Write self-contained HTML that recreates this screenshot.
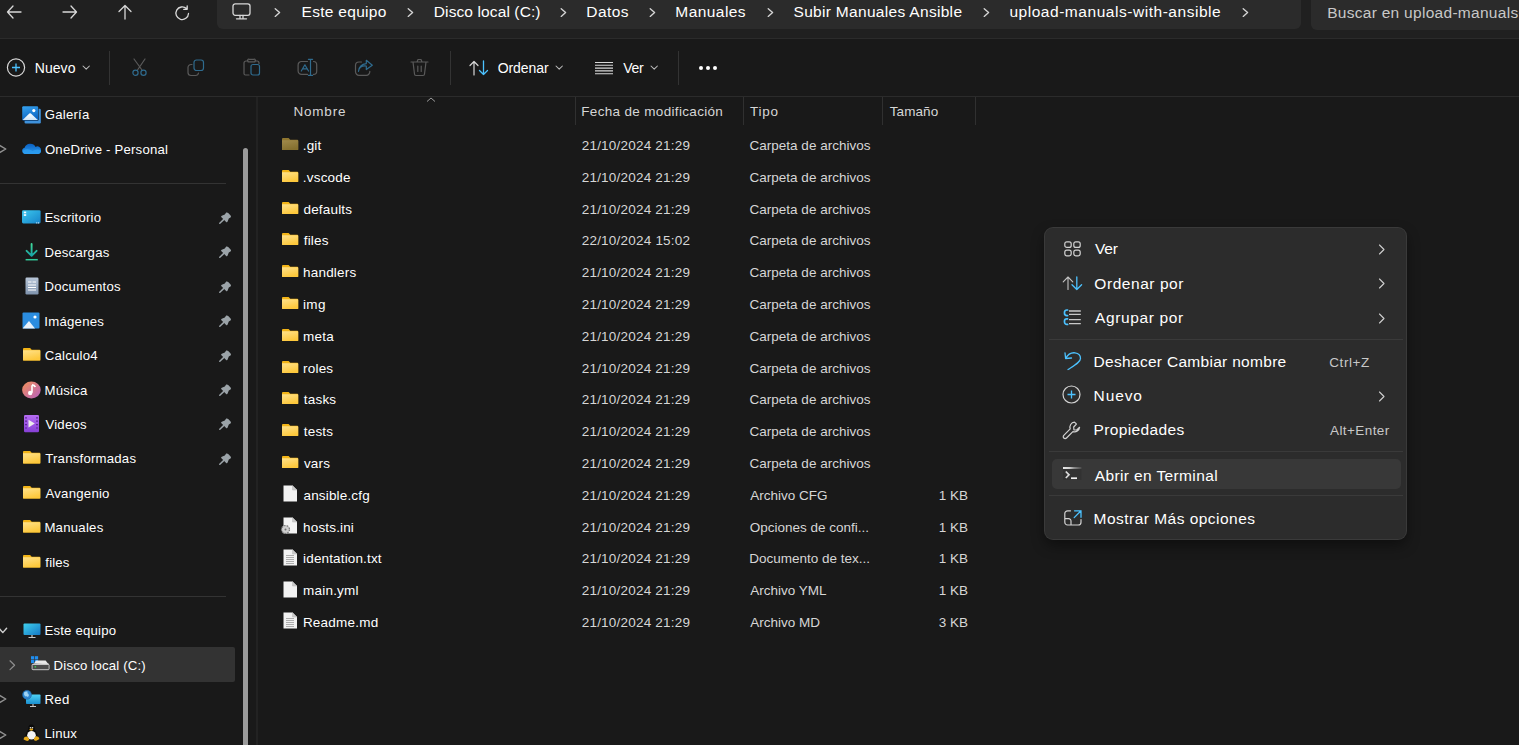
<!DOCTYPE html>
<html><head><meta charset="utf-8"><style>
html,body{margin:0;padding:0;}
body{width:1519px;height:745px;overflow:hidden;position:relative;background:#191919;font-family:"Liberation Sans",sans-serif;}
.t{position:absolute;white-space:nowrap;line-height:0;}
.r{position:absolute;}
.s{position:absolute;overflow:visible;}
</style></head><body>
<div class="r" style="left:0px;top:0px;width:1519px;height:38px;background:#202020;"></div>
<div class="r" style="left:0px;top:38px;width:1519px;height:1px;background:#2b2b2b;"></div>
<div class="r" style="left:0px;top:96px;width:1519px;height:1px;background:#2b2b2b;"></div>
<div class="r" style="left:256px;top:97px;width:2px;height:648px;background:#222222;"></div>
<div class="r" style="left:217px;top:-10px;width:1084px;height:39px;background:#2b2b2b;border-radius:6px;"></div>
<div class="r" style="left:1311px;top:-10px;width:220px;height:40px;background:#2b2b2b;border-radius:6px;"></div>
<svg class="s" style="left:6px;top:5px;" width="16" height="14" viewBox="0 0 16 14"><path d="M1.5 7 H15 M7 1 L1.5 7 L7 13" stroke="#d8d8d8" stroke-width="1.3" fill="none" stroke-linecap="round" stroke-linejoin="round"/></svg>
<svg class="s" style="left:62px;top:5px;" width="16" height="14" viewBox="0 0 16 14"><path d="M1 7 H14.5 M9 1 L14.5 7 L9 13" stroke="#d8d8d8" stroke-width="1.3" fill="none" stroke-linecap="round" stroke-linejoin="round"/></svg>
<svg class="s" style="left:117px;top:4px;" width="16" height="16" viewBox="0 0 16 16"><path d="M8 15 V1.5 M2 7.5 L8 1.5 L14 7.5" stroke="#d8d8d8" stroke-width="1.3" fill="none" stroke-linecap="round" stroke-linejoin="round"/></svg>
<svg class="s" style="left:174px;top:5px;" width="18" height="16" viewBox="0 0 18 16"><path d="M14.5 8.5 A6.3 6.3 0 1 1 12.5 3.6 M13.2 0.8 V4.3 H9.7" stroke="#d8d8d8" stroke-width="1.3" fill="none" stroke-linecap="round" stroke-linejoin="round"/></svg>
<svg class="s" style="left:232px;top:3px;" width="19" height="17" viewBox="0 0 19 17"><rect x="1" y="0.8" width="17" height="11.5" rx="2.2" stroke="#d8d8d8" stroke-width="1.3" fill="none" stroke-linecap="round" stroke-linejoin="round"/><path d="M8 12.3 V15.3 M11 12.3 V15.3 M4.5 15.8 H14.5" stroke="#d8d8d8" stroke-width="1.3" fill="none" stroke-linecap="round" stroke-linejoin="round"/></svg>
<svg class="s" style="left:274px;top:8px;" width="8" height="10" viewBox="0 0 8 10"><path d="M1.2 0.8 L5.6 4.6 L1.2 8.4" stroke="#d6d6d6" stroke-width="1.35" fill="none" stroke-linecap="round" stroke-linejoin="round"/></svg>
<svg class="s" style="left:407px;top:8px;" width="8" height="10" viewBox="0 0 8 10"><path d="M1.2 0.8 L5.6 4.6 L1.2 8.4" stroke="#d6d6d6" stroke-width="1.35" fill="none" stroke-linecap="round" stroke-linejoin="round"/></svg>
<svg class="s" style="left:560px;top:8px;" width="8" height="10" viewBox="0 0 8 10"><path d="M1.2 0.8 L5.6 4.6 L1.2 8.4" stroke="#d6d6d6" stroke-width="1.35" fill="none" stroke-linecap="round" stroke-linejoin="round"/></svg>
<svg class="s" style="left:649px;top:8px;" width="8" height="10" viewBox="0 0 8 10"><path d="M1.2 0.8 L5.6 4.6 L1.2 8.4" stroke="#d6d6d6" stroke-width="1.35" fill="none" stroke-linecap="round" stroke-linejoin="round"/></svg>
<svg class="s" style="left:767px;top:8px;" width="8" height="10" viewBox="0 0 8 10"><path d="M1.2 0.8 L5.6 4.6 L1.2 8.4" stroke="#d6d6d6" stroke-width="1.35" fill="none" stroke-linecap="round" stroke-linejoin="round"/></svg>
<svg class="s" style="left:983px;top:8px;" width="8" height="10" viewBox="0 0 8 10"><path d="M1.2 0.8 L5.6 4.6 L1.2 8.4" stroke="#d6d6d6" stroke-width="1.35" fill="none" stroke-linecap="round" stroke-linejoin="round"/></svg>
<svg class="s" style="left:1242px;top:8px;" width="8" height="10" viewBox="0 0 8 10"><path d="M1.2 0.8 L5.6 4.6 L1.2 8.4" stroke="#d6d6d6" stroke-width="1.35" fill="none" stroke-linecap="round" stroke-linejoin="round"/></svg>
<div class="t" style="left:301.5px;top:12.13px;font-size:15.5px;color:#ffffff;letter-spacing:0.302px;">Este equipo</div>
<div class="t" style="left:433.8px;top:12.13px;font-size:15.5px;color:#ffffff;letter-spacing:0.110px;">Disco local (C:)</div>
<div class="t" style="left:586.3px;top:12.13px;font-size:15.5px;color:#ffffff;letter-spacing:0.457px;">Datos</div>
<div class="t" style="left:675.3px;top:12.13px;font-size:15.5px;color:#ffffff;letter-spacing:0.441px;">Manuales</div>
<div class="t" style="left:793.5px;top:12.13px;font-size:15.5px;color:#ffffff;letter-spacing:0.310px;">Subir Manuales Ansible</div>
<div class="t" style="left:1009.4px;top:12.13px;font-size:15.5px;color:#ffffff;letter-spacing:0.538px;">upload-manuals-with-ansible</div>
<div class="t" style="left:1327.16px;top:13.23px;font-size:15.5px;color:#c8c8c8;letter-spacing:0.287px">Buscar en upload-manuals-with-ansible</div>
<svg class="s" style="left:6px;top:58px;" width="20" height="20" viewBox="0 0 20 20"><circle cx="10" cy="9.5" r="8.6" stroke="#d8d8d8" stroke-width="1.2" fill="none"/><path d="M10 5.5 V13.5 M6 9.5 H14" stroke="#4cc2ff" stroke-width="1.3"/></svg>
<div class="t" style="left:34.7px;top:68.25px;font-size:14px;color:#ffffff;letter-spacing:0.080px;">Nuevo</div>
<svg class="s" style="left:81.9px;top:65.4px;" width="9" height="7" viewBox="0 0 9 7"><path d="M1 1 L4.2 4.2 L7.4 1" stroke="#bdbdbd" stroke-width="1.05" fill="none" stroke-linecap="round" stroke-linejoin="round"/></svg>
<div class="r" style="left:109px;top:51px;width:1px;height:34px;background:#333333;"></div>
<svg class="s" style="left:131px;top:58px;" width="18" height="19" viewBox="0 0 18 19"><path d="M3 1 L11 12 M14 1 L6.5 12" stroke="#5a5a5a" stroke-width="1.2" fill="none" stroke-linecap="round" stroke-linejoin="round"/><circle cx="4.5" cy="14.8" r="2.6" stroke="#2f6b8e" stroke-width="1.2" fill="none" stroke-linecap="round" stroke-linejoin="round"/><circle cx="12.5" cy="14.8" r="2.6" stroke="#2f6b8e" stroke-width="1.2" fill="none" stroke-linecap="round" stroke-linejoin="round"/></svg>
<svg class="s" style="left:187px;top:59px;" width="18" height="18" viewBox="0 0 18 18"><path d="M5 5.5 H4 A3 3 0 0 0 1 8.5 V13.5 A3 3 0 0 0 4 16.5 H8.5 A3 3 0 0 0 11.5 14" stroke="#5a5a5a" stroke-width="1.2" fill="none" stroke-linecap="round" stroke-linejoin="round"/><rect x="7" y="1" width="9.5" height="10.5" rx="2.5" stroke="#2f6b8e" stroke-width="1.2" fill="none" stroke-linecap="round" stroke-linejoin="round"/></svg>
<svg class="s" style="left:243px;top:58px;" width="18" height="19" viewBox="0 0 18 19"><path d="M5 3 H3 A2 2 0 0 0 1 5 V15.5 A1.5 1.5 0 0 0 2.5 17 H6 M12 3 H14 A2 2 0 0 1 16 5 V5.5 M5 3 A1 1 0 0 1 6 1.3 H11 A1 1 0 0 1 12 3 V3.8 H5 Z" stroke="#5a5a5a" stroke-width="1.2" fill="none" stroke-linecap="round" stroke-linejoin="round"/><rect x="8" y="6.5" width="8.5" height="10.5" rx="2" stroke="#2f6b8e" stroke-width="1.2" fill="none" stroke-linecap="round" stroke-linejoin="round"/></svg>
<svg class="s" style="left:297px;top:58px;" width="21" height="19" viewBox="0 0 21 19"><path d="M10.5 3.5 H4.5 A3.4 3.4 0 0 0 1.1 6.9 V13 A3.4 3.4 0 0 0 4.5 16.4 H10.5 M16.5 3.5 A3.2 3.2 0 0 1 19.7 6.7 V13.2 A3.2 3.2 0 0 1 16.5 16.4" stroke="#5a5a5a" stroke-width="1.2" fill="none" stroke-linecap="round" stroke-linejoin="round"/><path d="M13.5 1.3 V17.3 M11.4 1.3 H15.6 M11.4 17.3 H15.6 M4.3 13 L7.9 6.8 L11.5 13 M5.6 10.8 H10.2" stroke="#2f6b8e" stroke-width="1.2" fill="none" stroke-linecap="round" stroke-linejoin="round"/></svg>
<svg class="s" style="left:354px;top:58px;" width="20" height="19" viewBox="0 0 20 19"><path d="M7.5 4 H5 A3.5 3.5 0 0 0 1.5 7.5 V13.8 A3.5 3.5 0 0 0 5 17.3 H12.3 A3.5 3.5 0 0 0 15.8 13.8 V13.3" stroke="#5a5a5a" stroke-width="1.2" fill="none" stroke-linecap="round" stroke-linejoin="round"/><path d="M4.5 13.3 C5 9.2 8.3 7.6 12.3 8 V11.6 L18.3 7.3 L12.3 2.3 V5.6 C7.8 6 5 9 4.5 13.3 Z" stroke="#2f6b8e" stroke-width="1.2" fill="none" stroke-linecap="round" stroke-linejoin="round"/></svg>
<svg class="s" style="left:410px;top:58px;" width="19" height="19" viewBox="0 0 19 19"><path d="M1 4 H18 M7 4 L8 1.5 H11 L12 4 M3 4 L4.5 16 A1.5 1.5 0 0 0 6 17.5 H13 A1.5 1.5 0 0 0 14.5 16 L16 4 M7.8 8 V13.5 M11.2 8 V13.5" stroke="#5a5a5a" stroke-width="1.2" fill="none" stroke-linecap="round" stroke-linejoin="round"/></svg>
<div class="r" style="left:450px;top:51px;width:1px;height:34px;background:#333333;"></div>
<svg class="s" style="left:469px;top:60px;" width="20" height="16" viewBox="0 0 20 16"><path d="M5 15 V1.5 M1 5.5 L5 1.5 L9 5.5" stroke="#d8d8d8" stroke-width="1.2" fill="none" stroke-linecap="round" stroke-linejoin="round"/><path d="M14.5 1 V14.5 M10.5 10.5 L14.5 14.5 L18.5 10.5" stroke="#4cc2ff" stroke-width="1.3" fill="none" stroke-linecap="round" stroke-linejoin="round"/></svg>
<div class="t" style="left:497.7px;top:68.25px;font-size:14px;color:#ffffff;letter-spacing:-0.078px;">Ordenar</div>
<svg class="s" style="left:555.3px;top:65.4px;" width="9" height="7" viewBox="0 0 9 7"><path d="M1 1 L4.2 4.2 L7.4 1" stroke="#bdbdbd" stroke-width="1.05" fill="none" stroke-linecap="round" stroke-linejoin="round"/></svg>
<svg class="s" style="left:594px;top:61px;" width="20" height="14" viewBox="0 0 20 14"><path d="M1 1.5 H19 M1 4.3 H19 M1 7.1 H19 M1 9.9 H19 M1 12.7 H19" stroke="#d8d8d8" stroke-width="1.1"/></svg>
<div class="t" style="left:623.2px;top:68.25px;font-size:14px;color:#ffffff;letter-spacing:-0.260px;">Ver</div>
<svg class="s" style="left:650.1px;top:65.4px;" width="9" height="7" viewBox="0 0 9 7"><path d="M1 1 L4.2 4.2 L7.4 1" stroke="#bdbdbd" stroke-width="1.05" fill="none" stroke-linecap="round" stroke-linejoin="round"/></svg>
<div class="r" style="left:678px;top:51px;width:1px;height:34px;background:#333333;"></div>
<div class="r" style="left:698.5px;top:66.3px;width:4px;height:4px;border-radius:2px;background:#ffffff"></div>
<div class="r" style="left:705.8px;top:66.3px;width:4px;height:4px;border-radius:2px;background:#ffffff"></div>
<div class="r" style="left:713.2px;top:66.3px;width:4px;height:4px;border-radius:2px;background:#ffffff"></div>
<div class="r" style="left:243px;top:148px;width:5px;height:620px;background:#9b9b9b;border-radius:2.5px;"></div>
<div class="r" style="left:0px;top:183px;width:226px;height:1px;background:#333333;"></div>
<div class="r" style="left:0px;top:596px;width:226px;height:1px;background:#333333;"></div>
<div class="r" style="left:0px;top:647px;width:235px;height:35px;background:#333333;border-radius:0 2px 2px 0;"></div>
<div class="t" style="left:44.8px;top:114.83px;font-size:13.2px;color:#ffffff;letter-spacing:0.216px;">Galería</div>
<svg class="s" style="left:22px;top:105.5px;" width="20" height="18" viewBox="0 0 20 18"><defs><linearGradient id="gl" x1="0" y1="0" x2="0.3" y2="1"><stop offset="0" stop-color="#36a3f0"/><stop offset="1" stop-color="#0c66c4"/></linearGradient><linearGradient id="gm" x1="0" y1="0" x2="0" y2="1"><stop offset="0" stop-color="#ffffff"/><stop offset="1" stop-color="#cfe5f8"/></linearGradient></defs><rect x="2.6" y="2.8" width="16.2" height="14.6" rx="1.2" fill="#3f92dc"/><rect x="-0.3" y="-0.3" width="16.9" height="15.1" rx="1.4" fill="#151515"/><rect x="0.2" y="0.2" width="16" height="14.2" rx="1.2" fill="url(#gl)"/><path d="M0.6 14 L7.3 7.6 Q8.1 6.9 8.9 7.6 L15.8 14 Z" fill="url(#gm)"/><circle cx="11.8" cy="4.6" r="1.6" fill="#ffffff"/></svg>
<div class="t" style="left:44.9px;top:149.83px;font-size:13.2px;color:#ffffff;letter-spacing:0.199px;">OneDrive - Personal</div>
<svg class="s" style="left:21.8px;top:142.8px;" width="20" height="12" viewBox="0 0 20 12"><defs><linearGradient id="odg" x1="0" y1="0" x2="0" y2="1"><stop offset="0" stop-color="#0a5fc0"/><stop offset="1" stop-color="#2b9bf0"/></linearGradient></defs><path d="M3.2 11 A3.2 3.2 0 0 1 2.6 4.7 A6 6 0 0 1 13.6 3.9 A3.6 3.6 0 0 1 19 7.4 A3.6 3.6 0 0 1 16 11 Z" fill="url(#odg)"/><path d="M3.2 11 A3.2 3.2 0 0 1 1 7.5 Q6 5 10.5 8 Q15 5.2 19 7.6 A3.6 3.6 0 0 1 16 11 Z" fill="#2c9cf0" opacity="0.85"/></svg>
<div class="t" style="left:44.4px;top:218.43px;font-size:13.2px;color:#ffffff;letter-spacing:0.183px;">Escritorio</div>
<svg class="s" style="left:219.3px;top:211.70000000000002px;" width="13" height="12" viewBox="0 0 13 12"><path d="M7.2 0.6 Q8.2 0.2 9.2 1 L11.6 3.4 Q12.3 4.4 11.8 5.3 L9.8 6.6 L8.6 9.6 Q8.3 10.6 7.4 10.2 L2.2 5 Q1.8 4.1 2.8 3.8 L5.8 2.6 Z" fill="#9ba3a8"/><path d="M4.6 7.6 L0.8 11.2" stroke="#9ba3a8" stroke-width="1.5" stroke-linecap="round"/></svg>
<svg class="s" style="left:22px;top:210px;" width="19" height="14" viewBox="0 0 19 14"><defs><linearGradient id="dk" x1="0" y1="0" x2="1" y2="1"><stop offset="0" stop-color="#3cc8ee"/><stop offset="1" stop-color="#1683c9"/></linearGradient></defs><rect x="0" y="0.2" width="18.6" height="13.2" rx="1.3" fill="url(#dk)"/><rect x="1.8" y="1.6" width="2.4" height="1.7" fill="#f4fbff"/><rect x="1.8" y="4.2" width="2.4" height="1.7" fill="#f4fbff"/><rect x="14.2" y="12.4" width="1.1" height="1" fill="#e8f4ff"/><rect x="16" y="12.4" width="1.1" height="1" fill="#e8f4ff"/></svg>
<div class="t" style="left:44.4px;top:253.03px;font-size:13.2px;color:#ffffff;letter-spacing:0.236px;">Descargas</div>
<svg class="s" style="left:219.3px;top:246.3px;" width="13" height="12" viewBox="0 0 13 12"><path d="M7.2 0.6 Q8.2 0.2 9.2 1 L11.6 3.4 Q12.3 4.4 11.8 5.3 L9.8 6.6 L8.6 9.6 Q8.3 10.6 7.4 10.2 L2.2 5 Q1.8 4.1 2.8 3.8 L5.8 2.6 Z" fill="#9ba3a8"/><path d="M4.6 7.6 L0.8 11.2" stroke="#9ba3a8" stroke-width="1.5" stroke-linecap="round"/></svg>
<svg class="s" style="left:25px;top:243px;" width="14" height="18" viewBox="0 0 14 18"><defs><linearGradient id="dlg" x1="0" y1="0" x2="0" y2="1"><stop offset="0" stop-color="#3fd99a"/><stop offset="1" stop-color="#17a3a6"/></linearGradient></defs><path d="M6.6 1 V12.6 M1.6 7.8 L6.6 12.8 L11.6 7.8" stroke="url(#dlg)" stroke-width="1.9" fill="none" stroke-linecap="round" stroke-linejoin="round"/><path d="M0.6 16.7 H12.8" stroke="#33c99a" stroke-width="1.5"/></svg>
<div class="t" style="left:44.4px;top:287.43px;font-size:13.2px;color:#ffffff;letter-spacing:0.247px;">Documentos</div>
<svg class="s" style="left:219.3px;top:280.7px;" width="13" height="12" viewBox="0 0 13 12"><path d="M7.2 0.6 Q8.2 0.2 9.2 1 L11.6 3.4 Q12.3 4.4 11.8 5.3 L9.8 6.6 L8.6 9.6 Q8.3 10.6 7.4 10.2 L2.2 5 Q1.8 4.1 2.8 3.8 L5.8 2.6 Z" fill="#9ba3a8"/><path d="M4.6 7.6 L0.8 11.2" stroke="#9ba3a8" stroke-width="1.5" stroke-linecap="round"/></svg>
<svg class="s" style="left:25px;top:277px;" width="14" height="18" viewBox="0 0 14 18"><defs><linearGradient id="dc" x1="0" y1="0" x2="0" y2="1"><stop offset="0" stop-color="#b8c6d8"/><stop offset="1" stop-color="#7f93ad"/></linearGradient></defs><rect x="0.5" y="0.5" width="13" height="17" rx="1.2" fill="url(#dc)"/><path d="M3 5 H6.5 M7.5 5 H11 M3 8 H11 M3 10.5 H11 M3 13 H11" stroke="#ffffff" stroke-width="1"/></svg>
<div class="t" style="left:44.3px;top:321.83px;font-size:13.2px;color:#ffffff;letter-spacing:0.248px;">Imágenes</div>
<svg class="s" style="left:219.3px;top:315.1px;" width="13" height="12" viewBox="0 0 13 12"><path d="M7.2 0.6 Q8.2 0.2 9.2 1 L11.6 3.4 Q12.3 4.4 11.8 5.3 L9.8 6.6 L8.6 9.6 Q8.3 10.6 7.4 10.2 L2.2 5 Q1.8 4.1 2.8 3.8 L5.8 2.6 Z" fill="#9ba3a8"/><path d="M4.6 7.6 L0.8 11.2" stroke="#9ba3a8" stroke-width="1.5" stroke-linecap="round"/></svg>
<svg class="s" style="left:22px;top:312px;" width="18" height="17" viewBox="0 0 18 17"><rect x="0.5" y="0.5" width="17" height="16" rx="1" fill="#2b8de0"/><path d="M0.5 16.5 L7 9 L13 16.5 Z" fill="#e8f2fb"/><circle cx="13" cy="5" r="1.6" fill="#ffffff"/></svg>
<div class="t" style="left:44.8px;top:356.23px;font-size:13.2px;color:#ffffff;letter-spacing:0.220px;">Calculo4</div>
<svg class="s" style="left:219.3px;top:349.5px;" width="13" height="12" viewBox="0 0 13 12"><path d="M7.2 0.6 Q8.2 0.2 9.2 1 L11.6 3.4 Q12.3 4.4 11.8 5.3 L9.8 6.6 L8.6 9.6 Q8.3 10.6 7.4 10.2 L2.2 5 Q1.8 4.1 2.8 3.8 L5.8 2.6 Z" fill="#9ba3a8"/><path d="M4.6 7.6 L0.8 11.2" stroke="#9ba3a8" stroke-width="1.5" stroke-linecap="round"/></svg>
<svg class="s" style="left:22.9px;top:348.09999999999997px;" width="18" height="13" viewBox="0 0 18 13"><defs><linearGradient id="fg22348" x1="0" y1="0" x2="0.4" y2="1"><stop offset="0" stop-color="#ffe28c"/><stop offset="1" stop-color="#fdc83c"/></linearGradient></defs><path d="M0 1 A1 1 0 0 1 1 0 H7.09 L8.69 1.8 H16.50 A0.8 0.8 0 0 1 17.30 2.6 V12.50 H0 Z" fill="#f2b417"/><path d="M0 2.2 H16.50 A0.8 0.8 0 0 1 17.30 3 V11.70 A0.8 0.8 0 0 1 16.50 12.50 H0.8 A0.8 0.8 0 0 1 0 11.70 Z" fill="url(#fg22348)"/></svg>
<div class="t" style="left:44.4px;top:390.63px;font-size:13.2px;color:#ffffff;letter-spacing:0.251px;">Música</div>
<svg class="s" style="left:219.3px;top:383.90000000000003px;" width="13" height="12" viewBox="0 0 13 12"><path d="M7.2 0.6 Q8.2 0.2 9.2 1 L11.6 3.4 Q12.3 4.4 11.8 5.3 L9.8 6.6 L8.6 9.6 Q8.3 10.6 7.4 10.2 L2.2 5 Q1.8 4.1 2.8 3.8 L5.8 2.6 Z" fill="#9ba3a8"/><path d="M4.6 7.6 L0.8 11.2" stroke="#9ba3a8" stroke-width="1.5" stroke-linecap="round"/></svg>
<svg class="s" style="left:22px;top:380.5px;" width="19" height="18" viewBox="0 0 19 18"><defs><linearGradient id="mg" x1="0" y1="0" x2="1" y2="1"><stop offset="0" stop-color="#f39157"/><stop offset="1" stop-color="#b65fc0"/></linearGradient></defs><ellipse cx="9.4" cy="9" rx="9.3" ry="8.4" fill="url(#mg)"/><path d="M10 4.2 V11.8" stroke="#fff" stroke-width="1.6"/><path d="M10 3.8 Q12.5 4 13.3 6" stroke="#fff" stroke-width="1.8" fill="none"/><circle cx="8.2" cy="12" r="2.2" fill="#fff"/></svg>
<div class="t" style="left:45.4px;top:425.03px;font-size:13.2px;color:#ffffff;letter-spacing:0.240px;">Videos</div>
<svg class="s" style="left:219.3px;top:418.3px;" width="13" height="12" viewBox="0 0 13 12"><path d="M7.2 0.6 Q8.2 0.2 9.2 1 L11.6 3.4 Q12.3 4.4 11.8 5.3 L9.8 6.6 L8.6 9.6 Q8.3 10.6 7.4 10.2 L2.2 5 Q1.8 4.1 2.8 3.8 L5.8 2.6 Z" fill="#9ba3a8"/><path d="M4.6 7.6 L0.8 11.2" stroke="#9ba3a8" stroke-width="1.5" stroke-linecap="round"/></svg>
<svg class="s" style="left:24px;top:415px;" width="16" height="18" viewBox="0 0 16 18"><defs><linearGradient id="vg" x1="0" y1="0" x2="0" y2="1"><stop offset="0" stop-color="#b56cf2"/><stop offset="1" stop-color="#8740d6"/></linearGradient></defs><rect x="0" y="0" width="15" height="17.2" rx="1.2" fill="url(#vg)"/><path d="M1.2 2.8 H2.8 M1.2 6.2 H2.8 M1.2 9.6 H2.8 M1.2 13 H2.8 M12.2 2.8 H13.8 M12.2 6.2 H13.8 M12.2 9.6 H13.8 M12.2 13 H13.8" stroke="#4f1f86" stroke-width="1.2"/><path d="M4.5 4.8 L10.8 8.6 L4.5 12.4 Z" fill="#ececec"/></svg>
<div class="t" style="left:45.2px;top:459.43px;font-size:13.2px;color:#ffffff;letter-spacing:0.220px;">Transformadas</div>
<svg class="s" style="left:219.3px;top:452.7px;" width="13" height="12" viewBox="0 0 13 12"><path d="M7.2 0.6 Q8.2 0.2 9.2 1 L11.6 3.4 Q12.3 4.4 11.8 5.3 L9.8 6.6 L8.6 9.6 Q8.3 10.6 7.4 10.2 L2.2 5 Q1.8 4.1 2.8 3.8 L5.8 2.6 Z" fill="#9ba3a8"/><path d="M4.6 7.6 L0.8 11.2" stroke="#9ba3a8" stroke-width="1.5" stroke-linecap="round"/></svg>
<svg class="s" style="left:22.9px;top:451.29999999999995px;" width="18" height="13" viewBox="0 0 18 13"><defs><linearGradient id="fg22451" x1="0" y1="0" x2="0.4" y2="1"><stop offset="0" stop-color="#ffe28c"/><stop offset="1" stop-color="#fdc83c"/></linearGradient></defs><path d="M0 1 A1 1 0 0 1 1 0 H7.09 L8.69 1.8 H16.50 A0.8 0.8 0 0 1 17.30 2.6 V12.50 H0 Z" fill="#f2b417"/><path d="M0 2.2 H16.50 A0.8 0.8 0 0 1 17.30 3 V11.70 A0.8 0.8 0 0 1 16.50 12.50 H0.8 A0.8 0.8 0 0 1 0 11.70 Z" fill="url(#fg22451)"/></svg>
<div class="t" style="left:45.5px;top:493.83px;font-size:13.2px;color:#ffffff;letter-spacing:0.233px;">Avangenio</div>
<svg class="s" style="left:22.9px;top:485.7px;" width="18" height="13" viewBox="0 0 18 13"><defs><linearGradient id="fg22485" x1="0" y1="0" x2="0.4" y2="1"><stop offset="0" stop-color="#ffe28c"/><stop offset="1" stop-color="#fdc83c"/></linearGradient></defs><path d="M0 1 A1 1 0 0 1 1 0 H7.09 L8.69 1.8 H16.50 A0.8 0.8 0 0 1 17.30 2.6 V12.50 H0 Z" fill="#f2b417"/><path d="M0 2.2 H16.50 A0.8 0.8 0 0 1 17.30 3 V11.70 A0.8 0.8 0 0 1 16.50 12.50 H0.8 A0.8 0.8 0 0 1 0 11.70 Z" fill="url(#fg22485)"/></svg>
<div class="t" style="left:44.4px;top:528.23px;font-size:13.2px;color:#ffffff;letter-spacing:0.245px;">Manuales</div>
<svg class="s" style="left:22.9px;top:520.1px;" width="18" height="13" viewBox="0 0 18 13"><defs><linearGradient id="fg22520" x1="0" y1="0" x2="0.4" y2="1"><stop offset="0" stop-color="#ffe28c"/><stop offset="1" stop-color="#fdc83c"/></linearGradient></defs><path d="M0 1 A1 1 0 0 1 1 0 H7.09 L8.69 1.8 H16.50 A0.8 0.8 0 0 1 17.30 2.6 V12.50 H0 Z" fill="#f2b417"/><path d="M0 2.2 H16.50 A0.8 0.8 0 0 1 17.30 3 V11.70 A0.8 0.8 0 0 1 16.50 12.50 H0.8 A0.8 0.8 0 0 1 0 11.70 Z" fill="url(#fg22520)"/></svg>
<div class="t" style="left:45.3px;top:562.63px;font-size:13.2px;color:#ffffff;letter-spacing:0.176px;">files</div>
<svg class="s" style="left:22.9px;top:554.5px;" width="18" height="13" viewBox="0 0 18 13"><defs><linearGradient id="fg22554" x1="0" y1="0" x2="0.4" y2="1"><stop offset="0" stop-color="#ffe28c"/><stop offset="1" stop-color="#fdc83c"/></linearGradient></defs><path d="M0 1 A1 1 0 0 1 1 0 H7.09 L8.69 1.8 H16.50 A0.8 0.8 0 0 1 17.30 2.6 V12.50 H0 Z" fill="#f2b417"/><path d="M0 2.2 H16.50 A0.8 0.8 0 0 1 17.30 3 V11.70 A0.8 0.8 0 0 1 16.50 12.50 H0.8 A0.8 0.8 0 0 1 0 11.70 Z" fill="url(#fg22554)"/></svg>
<div class="t" style="left:44.4px;top:631.33px;font-size:13.2px;color:#ffffff;letter-spacing:0.209px;">Este equipo</div>
<svg class="s" style="left:22.8px;top:622.8px;" width="18" height="16" viewBox="0 0 18 16"><defs><linearGradient id="pcg" x1="0" y1="0" x2="1" y2="1"><stop offset="0" stop-color="#3fd0ee"/><stop offset="1" stop-color="#1577c4"/></linearGradient></defs><rect x="0.5" y="0.5" width="17" height="11.5" rx="1" fill="url(#pcg)"/><path d="M9 12 V14 M5.5 14.5 H12.5" stroke="#c8c8c8" stroke-width="1.2"/></svg>
<div class="t" style="left:44.4px;top:699.93px;font-size:13.2px;color:#ffffff;letter-spacing:0.363px;">Red</div>
<svg class="s" style="left:22px;top:690px;" width="19" height="18" viewBox="0 0 19 18"><defs><linearGradient id="ng" x1="0" y1="0" x2="0" y2="1"><stop offset="0" stop-color="#4fd2f5"/><stop offset="1" stop-color="#1a8fd0"/></linearGradient></defs><rect x="4" y="4.5" width="14.5" height="9.5" rx="0.8" fill="url(#ng)"/><path d="M11 14 V16 M8 16.5 H14" stroke="#c8c8c8" stroke-width="1.1"/><circle cx="5" cy="4.8" r="4.5" fill="#2f86cf"/><path d="M2 2.5 Q3.5 1 5.5 1.5 Q5 3.5 6.5 4 Q7.5 5.5 6 7 Q4.5 6 3.5 6.5 Q1.5 5 2 2.5 Z" fill="#9fd3f5"/><circle cx="5" cy="4.8" r="4.5" fill="none" stroke="#1d5f9e" stroke-width="0.5"/></svg>
<div class="t" style="left:44.4px;top:734.33px;font-size:13.2px;color:#ffffff;letter-spacing:0.236px;">Linux</div>
<svg class="s" style="left:23px;top:724px;" width="17" height="17" viewBox="0 0 17 17"><path d="M8.5 0.5 C5.8 0.5 5.2 3 5.3 5.5 C4 7.5 2.2 9.5 2.4 12.5 C2.6 14.5 5 15.5 8.5 15.5 C12 15.5 14.4 14.5 14.6 12.5 C14.8 9.5 13 7.5 11.7 5.5 C11.8 3 11.2 0.5 8.5 0.5 Z" fill="#0a0a0a"/><ellipse cx="8.5" cy="11.2" rx="4.3" ry="4.3" fill="#f4f4f4"/><circle cx="7.5" cy="3.8" r="0.8" fill="#e8e8e8"/><circle cx="9.5" cy="3.8" r="0.8" fill="#e8e8e8"/><ellipse cx="8.3" cy="5.6" rx="1.9" ry="1.1" fill="#e6a817"/><path d="M0.6 15.6 Q0.8 12.6 3.6 12.6 Q5.8 13 6.2 15.8 Q5.6 17.2 3.4 16.8 Z M16.4 15 Q16 12 13.2 12.3 Q11 13 10.8 15.8 Q11.8 17.4 13.8 16.6 Z" fill="#e6a817"/></svg>
<div class="t" style="left:53.6px;top:665.83px;font-size:13.2px;color:#ffffff;letter-spacing:0.179px;">Disco local (C:)</div>
<svg class="s" style="left:31px;top:655.5px;" width="19" height="15" viewBox="0 0 19 15"><rect x="0" y="0.2" width="3.2" height="3.2" fill="#1f8ef0"/><rect x="3.9" y="0.2" width="3.2" height="3.2" fill="#1f8ef0"/><rect x="0" y="3.9" width="3.2" height="3.2" fill="#1f8ef0"/><rect x="3.9" y="3.9" width="3.2" height="3.2" fill="#1f8ef0"/><path d="M3.2 7.2 L5 4.4 H14.6 L17.6 8.6 Z" fill="#e9e9e9"/><rect x="1.1" y="8.3" width="17" height="5.4" rx="0.9" fill="#4c4c4c" stroke="#d2d2d2" stroke-width="0.9"/><path d="M3.2 7.4 L1.1 8.6 H18.1 L17.4 7.6" fill="#e0e0e0"/><rect x="3.6" y="10.1" width="1.5" height="1.4" fill="#3bd14f"/></svg>
<svg class="s" style="left:-4.5px;top:143px;" width="11" height="12" viewBox="0 0 11 12"><path d="M1 0.8 L9.8 6 L1 11.2" stroke="#929292" stroke-width="1.4" fill="none" stroke-linecap="round" stroke-linejoin="round"/></svg>
<svg class="s" style="left:-4.5px;top:692.8px;" width="11" height="12" viewBox="0 0 11 12"><path d="M1 0.8 L9.8 6 L1 11.2" stroke="#929292" stroke-width="1.4" fill="none" stroke-linecap="round" stroke-linejoin="round"/></svg>
<svg class="s" style="left:-4.5px;top:728.5px;" width="11" height="12" viewBox="0 0 11 12"><path d="M1 0.8 L9.8 6 L1 11.2" stroke="#929292" stroke-width="1.4" fill="none" stroke-linecap="round" stroke-linejoin="round"/></svg>
<svg class="s" style="left:8.5px;top:659.8px;" width="8" height="11" viewBox="0 0 8 11"><path d="M1 0.8 L5.6 5.2 L1 9.6" stroke="#8f8f8f" stroke-width="1.2" fill="none" stroke-linecap="round" stroke-linejoin="round"/></svg>
<svg class="s" style="left:-2px;top:626.5px;" width="10" height="8" viewBox="0 0 10 8"><path d="M1 1.2 L4.8 5.6 L8.6 1.2" stroke="#cfcfcf" stroke-width="1.4" fill="none" stroke-linecap="round" stroke-linejoin="round"/></svg>
<div class="t" style="left:293.4px;top:112.22px;font-size:13.5px;color:#d6d6d6;letter-spacing:0.819px;">Nombre</div>
<div class="t" style="left:581.3px;top:112.22px;font-size:13.5px;color:#d6d6d6;letter-spacing:0.325px;">Fecha de modificación</div>
<div class="t" style="left:750.0px;top:112.22px;font-size:13.5px;color:#d6d6d6;letter-spacing:0.731px;">Tipo</div>
<div class="t" style="left:889.7px;top:112.22px;font-size:13.5px;color:#d6d6d6;letter-spacing:0.104px;">Tamaño</div>
<div class="r" style="left:575px;top:97px;width:1px;height:28px;background:#303030;"></div>
<div class="r" style="left:743px;top:97px;width:1px;height:28px;background:#303030;"></div>
<div class="r" style="left:882px;top:97px;width:1px;height:28px;background:#303030;"></div>
<div class="r" style="left:975px;top:97px;width:1px;height:28px;background:#303030;"></div>
<svg class="s" style="left:426px;top:97px;" width="10" height="6" viewBox="0 0 10 6"><path d="M1 4.5 L5 1 L9 4.5" stroke="#9a9a9a" stroke-width="1" fill="none"/></svg>
<div class="t" style="left:302.8px;top:145.92px;font-size:13.5px;color:#ffffff;letter-spacing:0.150px;">.git</div>
<div class="t" style="left:581.7px;top:145.92px;font-size:13.5px;color:#d6d6d6;letter-spacing:0.212px;">21/10/2024 21:29</div>
<div class="t" style="left:749.6px;top:145.92px;font-size:13.5px;color:#d6d6d6;letter-spacing:0.000px;">Carpeta de archivos</div>
<svg class="s" style="left:281.8px;top:137.9px;" width="17" height="13" viewBox="0 0 17 13"><defs><linearGradient id="fg281137" x1="0" y1="0" x2="0.4" y2="1"><stop offset="0" stop-color="#a08a4c"/><stop offset="1" stop-color="#85702f"/></linearGradient></defs><path d="M0 1 A1 1 0 0 1 1 0 H6.64 L8.24 1.8 H15.40 A0.8 0.8 0 0 1 16.20 2.6 V12.10 H0 Z" fill="#8f7630"/><path d="M0 2.2 H15.40 A0.8 0.8 0 0 1 16.20 3 V11.30 A0.8 0.8 0 0 1 15.40 12.10 H0.8 A0.8 0.8 0 0 1 0 11.30 Z" fill="url(#fg281137)"/></svg>
<div class="t" style="left:302.8px;top:177.72px;font-size:13.5px;color:#ffffff;letter-spacing:0.194px;">.vscode</div>
<div class="t" style="left:581.7px;top:177.72px;font-size:13.5px;color:#d6d6d6;letter-spacing:0.212px;">21/10/2024 21:29</div>
<div class="t" style="left:749.6px;top:177.72px;font-size:13.5px;color:#d6d6d6;letter-spacing:0.000px;">Carpeta de archivos</div>
<svg class="s" style="left:281.8px;top:169.70000000000002px;" width="17" height="13" viewBox="0 0 17 13"><defs><linearGradient id="fg281169" x1="0" y1="0" x2="0.4" y2="1"><stop offset="0" stop-color="#ffe28c"/><stop offset="1" stop-color="#fdc83c"/></linearGradient></defs><path d="M0 1 A1 1 0 0 1 1 0 H6.64 L8.24 1.8 H15.40 A0.8 0.8 0 0 1 16.20 2.6 V12.10 H0 Z" fill="#f2b417"/><path d="M0 2.2 H15.40 A0.8 0.8 0 0 1 16.20 3 V11.30 A0.8 0.8 0 0 1 15.40 12.10 H0.8 A0.8 0.8 0 0 1 0 11.30 Z" fill="url(#fg281169)"/></svg>
<div class="t" style="left:303.5px;top:209.52px;font-size:13.5px;color:#ffffff;letter-spacing:0.169px;">defaults</div>
<div class="t" style="left:581.7px;top:209.52px;font-size:13.5px;color:#d6d6d6;letter-spacing:0.212px;">21/10/2024 21:29</div>
<div class="t" style="left:749.6px;top:209.52px;font-size:13.5px;color:#d6d6d6;letter-spacing:0.000px;">Carpeta de archivos</div>
<svg class="s" style="left:281.8px;top:201.5px;" width="17" height="13" viewBox="0 0 17 13"><defs><linearGradient id="fg281201" x1="0" y1="0" x2="0.4" y2="1"><stop offset="0" stop-color="#ffe28c"/><stop offset="1" stop-color="#fdc83c"/></linearGradient></defs><path d="M0 1 A1 1 0 0 1 1 0 H6.64 L8.24 1.8 H15.40 A0.8 0.8 0 0 1 16.20 2.6 V12.10 H0 Z" fill="#f2b417"/><path d="M0 2.2 H15.40 A0.8 0.8 0 0 1 16.20 3 V11.30 A0.8 0.8 0 0 1 15.40 12.10 H0.8 A0.8 0.8 0 0 1 0 11.30 Z" fill="url(#fg281201)"/></svg>
<div class="t" style="left:303.8px;top:241.32px;font-size:13.5px;color:#ffffff;letter-spacing:0.150px;">files</div>
<div class="t" style="left:581.7px;top:241.32px;font-size:13.5px;color:#d6d6d6;letter-spacing:0.217px;">22/10/2024 15:02</div>
<div class="t" style="left:749.6px;top:241.32px;font-size:13.5px;color:#d6d6d6;letter-spacing:0.000px;">Carpeta de archivos</div>
<svg class="s" style="left:281.8px;top:233.3px;" width="17" height="13" viewBox="0 0 17 13"><defs><linearGradient id="fg281233" x1="0" y1="0" x2="0.4" y2="1"><stop offset="0" stop-color="#ffe28c"/><stop offset="1" stop-color="#fdc83c"/></linearGradient></defs><path d="M0 1 A1 1 0 0 1 1 0 H6.64 L8.24 1.8 H15.40 A0.8 0.8 0 0 1 16.20 2.6 V12.10 H0 Z" fill="#f2b417"/><path d="M0 2.2 H15.40 A0.8 0.8 0 0 1 16.20 3 V11.30 A0.8 0.8 0 0 1 15.40 12.10 H0.8 A0.8 0.8 0 0 1 0 11.30 Z" fill="url(#fg281233)"/></svg>
<div class="t" style="left:303.1px;top:273.12px;font-size:13.5px;color:#ffffff;letter-spacing:0.185px;">handlers</div>
<div class="t" style="left:581.7px;top:273.12px;font-size:13.5px;color:#d6d6d6;letter-spacing:0.212px;">21/10/2024 21:29</div>
<div class="t" style="left:749.6px;top:273.12px;font-size:13.5px;color:#d6d6d6;letter-spacing:0.000px;">Carpeta de archivos</div>
<svg class="s" style="left:281.8px;top:265.09999999999997px;" width="17" height="13" viewBox="0 0 17 13"><defs><linearGradient id="fg281265" x1="0" y1="0" x2="0.4" y2="1"><stop offset="0" stop-color="#ffe28c"/><stop offset="1" stop-color="#fdc83c"/></linearGradient></defs><path d="M0 1 A1 1 0 0 1 1 0 H6.64 L8.24 1.8 H15.40 A0.8 0.8 0 0 1 16.20 2.6 V12.10 H0 Z" fill="#f2b417"/><path d="M0 2.2 H15.40 A0.8 0.8 0 0 1 16.20 3 V11.30 A0.8 0.8 0 0 1 15.40 12.10 H0.8 A0.8 0.8 0 0 1 0 11.30 Z" fill="url(#fg281265)"/></svg>
<div class="t" style="left:303.1px;top:304.92px;font-size:13.5px;color:#ffffff;letter-spacing:0.272px;">img</div>
<div class="t" style="left:581.7px;top:304.92px;font-size:13.5px;color:#d6d6d6;letter-spacing:0.212px;">21/10/2024 21:29</div>
<div class="t" style="left:749.6px;top:304.92px;font-size:13.5px;color:#d6d6d6;letter-spacing:0.000px;">Carpeta de archivos</div>
<svg class="s" style="left:281.8px;top:296.9px;" width="17" height="13" viewBox="0 0 17 13"><defs><linearGradient id="fg281296" x1="0" y1="0" x2="0.4" y2="1"><stop offset="0" stop-color="#ffe28c"/><stop offset="1" stop-color="#fdc83c"/></linearGradient></defs><path d="M0 1 A1 1 0 0 1 1 0 H6.64 L8.24 1.8 H15.40 A0.8 0.8 0 0 1 16.20 2.6 V12.10 H0 Z" fill="#f2b417"/><path d="M0 2.2 H15.40 A0.8 0.8 0 0 1 16.20 3 V11.30 A0.8 0.8 0 0 1 15.40 12.10 H0.8 A0.8 0.8 0 0 1 0 11.30 Z" fill="url(#fg281296)"/></svg>
<div class="t" style="left:303.1px;top:336.72px;font-size:13.5px;color:#ffffff;letter-spacing:0.250px;">meta</div>
<div class="t" style="left:581.7px;top:336.72px;font-size:13.5px;color:#d6d6d6;letter-spacing:0.212px;">21/10/2024 21:29</div>
<div class="t" style="left:749.6px;top:336.72px;font-size:13.5px;color:#d6d6d6;letter-spacing:0.000px;">Carpeta de archivos</div>
<svg class="s" style="left:281.8px;top:328.7px;" width="17" height="13" viewBox="0 0 17 13"><defs><linearGradient id="fg281328" x1="0" y1="0" x2="0.4" y2="1"><stop offset="0" stop-color="#ffe28c"/><stop offset="1" stop-color="#fdc83c"/></linearGradient></defs><path d="M0 1 A1 1 0 0 1 1 0 H6.64 L8.24 1.8 H15.40 A0.8 0.8 0 0 1 16.20 2.6 V12.10 H0 Z" fill="#f2b417"/><path d="M0 2.2 H15.40 A0.8 0.8 0 0 1 16.20 3 V11.30 A0.8 0.8 0 0 1 15.40 12.10 H0.8 A0.8 0.8 0 0 1 0 11.30 Z" fill="url(#fg281328)"/></svg>
<div class="t" style="left:303.1px;top:368.52px;font-size:13.5px;color:#ffffff;letter-spacing:0.183px;">roles</div>
<div class="t" style="left:581.7px;top:368.52px;font-size:13.5px;color:#d6d6d6;letter-spacing:0.212px;">21/10/2024 21:29</div>
<div class="t" style="left:749.6px;top:368.52px;font-size:13.5px;color:#d6d6d6;letter-spacing:0.000px;">Carpeta de archivos</div>
<svg class="s" style="left:281.8px;top:360.5px;" width="17" height="13" viewBox="0 0 17 13"><defs><linearGradient id="fg281360" x1="0" y1="0" x2="0.4" y2="1"><stop offset="0" stop-color="#ffe28c"/><stop offset="1" stop-color="#fdc83c"/></linearGradient></defs><path d="M0 1 A1 1 0 0 1 1 0 H6.64 L8.24 1.8 H15.40 A0.8 0.8 0 0 1 16.20 2.6 V12.10 H0 Z" fill="#f2b417"/><path d="M0 2.2 H15.40 A0.8 0.8 0 0 1 16.20 3 V11.30 A0.8 0.8 0 0 1 15.40 12.10 H0.8 A0.8 0.8 0 0 1 0 11.30 Z" fill="url(#fg281360)"/></svg>
<div class="t" style="left:303.8px;top:400.32px;font-size:13.5px;color:#ffffff;letter-spacing:0.197px;">tasks</div>
<div class="t" style="left:581.7px;top:400.32px;font-size:13.5px;color:#d6d6d6;letter-spacing:0.212px;">21/10/2024 21:29</div>
<div class="t" style="left:749.6px;top:400.32px;font-size:13.5px;color:#d6d6d6;letter-spacing:0.000px;">Carpeta de archivos</div>
<svg class="s" style="left:281.8px;top:392.29999999999995px;" width="17" height="13" viewBox="0 0 17 13"><defs><linearGradient id="fg281392" x1="0" y1="0" x2="0.4" y2="1"><stop offset="0" stop-color="#ffe28c"/><stop offset="1" stop-color="#fdc83c"/></linearGradient></defs><path d="M0 1 A1 1 0 0 1 1 0 H6.64 L8.24 1.8 H15.40 A0.8 0.8 0 0 1 16.20 2.6 V12.10 H0 Z" fill="#f2b417"/><path d="M0 2.2 H15.40 A0.8 0.8 0 0 1 16.20 3 V11.30 A0.8 0.8 0 0 1 15.40 12.10 H0.8 A0.8 0.8 0 0 1 0 11.30 Z" fill="url(#fg281392)"/></svg>
<div class="t" style="left:303.8px;top:432.12px;font-size:13.5px;color:#ffffff;letter-spacing:0.178px;">tests</div>
<div class="t" style="left:581.7px;top:432.12px;font-size:13.5px;color:#d6d6d6;letter-spacing:0.212px;">21/10/2024 21:29</div>
<div class="t" style="left:749.6px;top:432.12px;font-size:13.5px;color:#d6d6d6;letter-spacing:0.000px;">Carpeta de archivos</div>
<svg class="s" style="left:281.8px;top:424.09999999999997px;" width="17" height="13" viewBox="0 0 17 13"><defs><linearGradient id="fg281424" x1="0" y1="0" x2="0.4" y2="1"><stop offset="0" stop-color="#ffe28c"/><stop offset="1" stop-color="#fdc83c"/></linearGradient></defs><path d="M0 1 A1 1 0 0 1 1 0 H6.64 L8.24 1.8 H15.40 A0.8 0.8 0 0 1 16.20 2.6 V12.10 H0 Z" fill="#f2b417"/><path d="M0 2.2 H15.40 A0.8 0.8 0 0 1 16.20 3 V11.30 A0.8 0.8 0 0 1 15.40 12.10 H0.8 A0.8 0.8 0 0 1 0 11.30 Z" fill="url(#fg281424)"/></svg>
<div class="t" style="left:303.9px;top:463.92px;font-size:13.5px;color:#ffffff;letter-spacing:0.213px;">vars</div>
<div class="t" style="left:581.7px;top:463.92px;font-size:13.5px;color:#d6d6d6;letter-spacing:0.212px;">21/10/2024 21:29</div>
<div class="t" style="left:749.6px;top:463.92px;font-size:13.5px;color:#d6d6d6;letter-spacing:0.000px;">Carpeta de archivos</div>
<svg class="s" style="left:281.8px;top:455.9px;" width="17" height="13" viewBox="0 0 17 13"><defs><linearGradient id="fg281455" x1="0" y1="0" x2="0.4" y2="1"><stop offset="0" stop-color="#ffe28c"/><stop offset="1" stop-color="#fdc83c"/></linearGradient></defs><path d="M0 1 A1 1 0 0 1 1 0 H6.64 L8.24 1.8 H15.40 A0.8 0.8 0 0 1 16.20 2.6 V12.10 H0 Z" fill="#f2b417"/><path d="M0 2.2 H15.40 A0.8 0.8 0 0 1 16.20 3 V11.30 A0.8 0.8 0 0 1 15.40 12.10 H0.8 A0.8 0.8 0 0 1 0 11.30 Z" fill="url(#fg281455)"/></svg>
<div class="t" style="left:303.5px;top:495.72px;font-size:13.5px;color:#ffffff;letter-spacing:0.161px;">ansible.cfg</div>
<div class="t" style="left:581.7px;top:495.72px;font-size:13.5px;color:#d6d6d6;letter-spacing:0.212px;">21/10/2024 21:29</div>
<div class="t" style="left:750.3px;top:495.72px;font-size:13.5px;color:#d6d6d6;letter-spacing:0.000px;">Archivo CFG</div>
<div class="t" style="left:938.7px;top:495.72px;font-size:13.5px;color:#d6d6d6;letter-spacing:0.000px;">1 KB</div>
<svg class="s" style="left:283px;top:485px;" width="15" height="17" viewBox="0 0 15 17"><path d="M0.5 0.5 H9.5 L14 5 V16.5 H0.5 Z" fill="#f2f2f2"/><path d="M9.5 0.5 V5 H14" fill="#c9c9c9" stroke="#bdbdbd" stroke-width="0.6"/></svg>
<div class="t" style="left:303.1px;top:527.52px;font-size:13.5px;color:#ffffff;letter-spacing:0.155px;">hosts.ini</div>
<div class="t" style="left:581.7px;top:527.52px;font-size:13.5px;color:#d6d6d6;letter-spacing:0.212px;">21/10/2024 21:29</div>
<div class="t" style="left:749.7px;top:527.52px;font-size:13.5px;color:#d6d6d6;letter-spacing:0.000px;">Opciones de confi...</div>
<div class="t" style="left:938.7px;top:527.52px;font-size:13.5px;color:#d6d6d6;letter-spacing:0.000px;">1 KB</div>
<svg class="s" style="left:283px;top:517px;" width="15" height="17" viewBox="0 0 15 17"><path d="M0.5 0.5 H9.5 L14 5 V16.5 H0.5 Z" fill="#f2f2f2"/><path d="M9.5 0.5 V5 H14" fill="#c9c9c9" stroke="#bdbdbd" stroke-width="0.6"/><circle cx="2.5" cy="12.5" r="4" fill="#c8c8c8" stroke="#7a7a7a" stroke-width="1.2" stroke-dasharray="1.6 1.2"/><circle cx="2.5" cy="12.5" r="2.6" fill="#d0d0d0"/><circle cx="2.5" cy="12.5" r="1" fill="#6f6f6f"/></svg>
<div class="t" style="left:303.1px;top:559.32px;font-size:13.5px;color:#ffffff;letter-spacing:0.147px;">identation.txt</div>
<div class="t" style="left:581.7px;top:559.32px;font-size:13.5px;color:#d6d6d6;letter-spacing:0.212px;">21/10/2024 21:29</div>
<div class="t" style="left:749.2px;top:559.32px;font-size:13.5px;color:#d6d6d6;letter-spacing:0.000px;">Documento de tex...</div>
<div class="t" style="left:938.7px;top:559.32px;font-size:13.5px;color:#d6d6d6;letter-spacing:0.000px;">1 KB</div>
<svg class="s" style="left:283px;top:549px;" width="15" height="17" viewBox="0 0 15 17"><path d="M0.5 0.5 H9.5 L14 5 V16.5 H0.5 Z" fill="#f2f2f2"/><path d="M9.5 0.5 V5 H14" fill="#c9c9c9" stroke="#bdbdbd" stroke-width="0.6"/><path d="M3 6.5 H11 M3 8.5 H11 M3 10.5 H11 M3 12.5 H11 M3 14.5 H11" stroke="#9a9a9a" stroke-width="0.8"/></svg>
<div class="t" style="left:303.1px;top:591.12px;font-size:13.5px;color:#ffffff;letter-spacing:0.193px;">main.yml</div>
<div class="t" style="left:581.7px;top:591.12px;font-size:13.5px;color:#d6d6d6;letter-spacing:0.212px;">21/10/2024 21:29</div>
<div class="t" style="left:750.3px;top:591.12px;font-size:13.5px;color:#d6d6d6;letter-spacing:0.000px;">Archivo YML</div>
<div class="t" style="left:938.7px;top:591.12px;font-size:13.5px;color:#d6d6d6;letter-spacing:0.000px;">1 KB</div>
<svg class="s" style="left:283px;top:581px;" width="15" height="17" viewBox="0 0 15 17"><path d="M0.5 0.5 H9.5 L14 5 V16.5 H0.5 Z" fill="#f2f2f2"/><path d="M9.5 0.5 V5 H14" fill="#c9c9c9" stroke="#bdbdbd" stroke-width="0.6"/></svg>
<div class="t" style="left:302.9px;top:622.92px;font-size:13.5px;color:#ffffff;letter-spacing:0.230px;">Readme.md</div>
<div class="t" style="left:581.7px;top:622.92px;font-size:13.5px;color:#d6d6d6;letter-spacing:0.212px;">21/10/2024 21:29</div>
<div class="t" style="left:750.3px;top:622.92px;font-size:13.5px;color:#d6d6d6;letter-spacing:0.000px;">Archivo MD</div>
<div class="t" style="left:938.7px;top:622.92px;font-size:13.5px;color:#d6d6d6;letter-spacing:0.000px;">3 KB</div>
<svg class="s" style="left:283px;top:612px;" width="15" height="17" viewBox="0 0 15 17"><path d="M0.5 0.5 H9.5 L14 5 V16.5 H0.5 Z" fill="#f2f2f2"/><path d="M9.5 0.5 V5 H14" fill="#c9c9c9" stroke="#bdbdbd" stroke-width="0.6"/><path d="M3 6.5 H11 M3 8.5 H11 M3 10.5 H11 M3 12.5 H11 M3 14.5 H11" stroke="#9a9a9a" stroke-width="0.8"/></svg>
<div class="r" style="left:1045px;top:228px;width:361px;height:311px;background:#2c2c2c;border-radius:8px;box-shadow:0 0 0 1px #3a3a3a, 0 6px 14px rgba(0,0,0,0.45);"></div>
<div class="r" style="left:1049px;top:339px;width:354px;height:1px;background:#3a3a3a;"></div>
<div class="r" style="left:1049px;top:451px;width:354px;height:1px;background:#3a3a3a;"></div>
<div class="r" style="left:1049px;top:495px;width:354px;height:1px;background:#3a3a3a;"></div>
<div class="r" style="left:1052px;top:459px;width:349px;height:30px;background:#383838;border-radius:5px;"></div>
<div class="t" style="left:1094.9px;top:249.13px;font-size:15.5px;color:#ffffff;letter-spacing:-0.120px;">Ver</div>
<div class="t" style="left:1094.3px;top:283.73px;font-size:15.5px;color:#ffffff;letter-spacing:0.559px;">Ordenar por</div>
<div class="t" style="left:1095.0px;top:318.23px;font-size:15.5px;color:#ffffff;letter-spacing:0.639px;">Agrupar por</div>
<div class="t" style="left:1093.6px;top:362.23px;font-size:15.5px;color:#ffffff;letter-spacing:0.298px;">Deshacer Cambiar nombre</div>
<div class="t" style="left:1093.6px;top:395.93px;font-size:15.5px;color:#ffffff;letter-spacing:0.891px;">Nuevo</div>
<div class="t" style="left:1093.6px;top:430.43px;font-size:15.5px;color:#ffffff;letter-spacing:0.365px;">Propiedades</div>
<div class="t" style="left:1094.8px;top:475.53px;font-size:15.5px;color:#ffffff;letter-spacing:0.371px;">Abrir en Terminal</div>
<div class="t" style="left:1093.6px;top:518.63px;font-size:15.5px;color:#ffffff;letter-spacing:0.471px;">Mostrar Más opciones</div>
<div class="t" style="left:1329.3px;top:362.92px;font-size:13.5px;color:#c8c8c8;letter-spacing:0.571px;">Ctrl+Z</div>
<div class="t" style="left:1330.0px;top:431.12px;font-size:13.5px;color:#c8c8c8;letter-spacing:0.414px;">Alt+Enter</div>
<svg class="s" style="left:1378px;top:243.5px;" width="8" height="11" viewBox="0 0 8 11"><path d="M1.5 1 L6 5.5 L1.5 10" stroke="#cfcfcf" stroke-width="1.1" fill="none" stroke-linecap="round" stroke-linejoin="round"/></svg>
<svg class="s" style="left:1378px;top:278px;" width="8" height="11" viewBox="0 0 8 11"><path d="M1.5 1 L6 5.5 L1.5 10" stroke="#cfcfcf" stroke-width="1.1" fill="none" stroke-linecap="round" stroke-linejoin="round"/></svg>
<svg class="s" style="left:1378px;top:312.5px;" width="8" height="11" viewBox="0 0 8 11"><path d="M1.5 1 L6 5.5 L1.5 10" stroke="#cfcfcf" stroke-width="1.1" fill="none" stroke-linecap="round" stroke-linejoin="round"/></svg>
<svg class="s" style="left:1378px;top:390.5px;" width="8" height="11" viewBox="0 0 8 11"><path d="M1.5 1 L6 5.5 L1.5 10" stroke="#cfcfcf" stroke-width="1.1" fill="none" stroke-linecap="round" stroke-linejoin="round"/></svg>
<svg class="s" style="left:1064px;top:240.5px;" width="18" height="17" viewBox="0 0 18 17"><rect x="0.8" y="0.8" width="6.4" height="5.6" rx="2" stroke="#d2d2d2" stroke-width="1.2" fill="none" stroke-linecap="round" stroke-linejoin="round"/><rect x="9.8" y="0.8" width="6.4" height="5.6" rx="2" stroke="#d2d2d2" stroke-width="1.2" fill="none" stroke-linecap="round" stroke-linejoin="round"/><rect x="0.8" y="9.2" width="6.4" height="5.6" rx="2" stroke="#d2d2d2" stroke-width="1.2" fill="none" stroke-linecap="round" stroke-linejoin="round"/><rect x="9.8" y="9.2" width="6.4" height="5.6" rx="2" stroke="#d2d2d2" stroke-width="1.2" fill="none" stroke-linecap="round" stroke-linejoin="round"/></svg>
<svg class="s" style="left:1062px;top:276px;" width="21" height="15" viewBox="0 0 21 15"><path d="M6 13.5 V1 M1.2 5.8 L6 1 L10.8 5.8" stroke="#c4c4c4" stroke-width="1.1" fill="none" stroke-linecap="round" stroke-linejoin="round"/><path d="M14.8 1 V13.5 M10 8.7 L14.8 13.5 L19.6 8.7" stroke="#4cc2ff" stroke-width="1.3" fill="none" stroke-linecap="round" stroke-linejoin="round"/></svg>
<svg class="s" style="left:1063px;top:309px;" width="19" height="17" viewBox="0 0 19 17"><path d="M6 2 H17.8 M6 5.4 H17.8 M6 10.6 H17.8 M6 14.6 H17.8" stroke="#c8c8c8" stroke-width="1.4"/><path d="M4.6 1 H3.8 A2.3 2.3 0 0 0 1.5 3.3 V4.3 A2.3 2.3 0 0 0 3.8 6.6 H4.6 M4.6 9.8 H3.8 A2.3 2.3 0 0 0 1.5 12.1 V13.1 A2.3 2.3 0 0 0 3.8 15.4 H4.6" stroke="#4cc2ff" stroke-width="1.7" fill="none" stroke-linecap="round"/></svg>
<svg class="s" style="left:1063px;top:352px;" width="20" height="19" viewBox="0 0 20 19"><path d="M2 0.8 L2.6 6.5 L8.5 6 M2.6 6.5 C5 2 9 0.5 12 0.8 C15.5 1.2 17.5 3.5 17.5 6.5 C17.5 10 12 13 5 17.5" stroke="#4cc2ff" stroke-width="1.3" fill="none" stroke-linecap="round" stroke-linejoin="round"/></svg>
<svg class="s" style="left:1062px;top:385.2px;" width="19" height="19" viewBox="0 0 19 19"><circle cx="9.5" cy="9.5" r="8.5" stroke="#d2d2d2" stroke-width="1.2" fill="none"/><path d="M9.5 5.5 V13.5 M5.5 9.5 H13.5" stroke="#4cc2ff" stroke-width="1.3"/></svg>
<svg class="s" style="left:1062px;top:421px;" width="20" height="19" viewBox="0 0 20 19"><path d="M12.5 1.2 A5 5 0 0 0 8.2 7.9 L1.8 14.3 A1.9 1.9 0 0 0 4.5 17 L10.9 10.6 A5 5 0 0 0 17.6 6.3 L14.7 9 L11.9 8.8 L11.7 6 L14.4 3.1 A5 5 0 0 0 12.5 1.2 Z" stroke="#d2d2d2" stroke-width="1.2" fill="none" stroke-linecap="round" stroke-linejoin="round"/></svg>
<svg class="s" style="left:1063px;top:467px;" width="19" height="13" viewBox="0 0 19 13"><defs><linearGradient id="tg" x1="0" y1="0" x2="1" y2="0"><stop offset="0" stop-color="#e8e8e8"/><stop offset="0.35" stop-color="#d0d0d0"/><stop offset="0.6" stop-color="#8a8a8a"/><stop offset="1" stop-color="#4a4a4a"/></linearGradient></defs><rect x="0" y="0" width="18.5" height="2" fill="url(#tg)"/><rect x="0" y="2" width="18.5" height="11" fill="#323232"/><path d="M2.8 4.5 L6 7.8 L2.8 11" stroke="#dcdcdc" stroke-width="1.7" fill="none"/><path d="M8 11.2 H14" stroke="#f0f0f0" stroke-width="1.7"/></svg>
<svg class="s" style="left:1064px;top:510px;" width="18" height="16" viewBox="0 0 18 16"><path d="M6.5 0.8 H3.6 A2.8 2.8 0 0 0 0.8 3.6 V12.2 A2.8 2.8 0 0 0 3.6 15 H14.2 A2.8 2.8 0 0 0 17 12.2 V9.5 M0.8 8.6 H4.6 A2.4 2.4 0 0 1 7 11 V15" stroke="#d2d2d2" stroke-width="1.2" fill="none" stroke-linecap="round" stroke-linejoin="round"/><path d="M10.5 0.8 H17 V7.3 M17 0.8 L10.2 7.6" stroke="#4cc2ff" stroke-width="1.3" fill="none" stroke-linecap="round" stroke-linejoin="round"/></svg>
</body></html>
